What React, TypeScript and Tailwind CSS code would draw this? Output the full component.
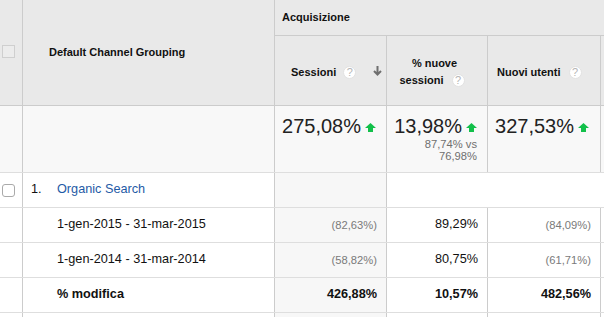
import React from "react";

const Q = () => (
  <span className="inline-flex w-[13px] h-[13px] rounded-full bg-white items-center justify-center text-[11px] leading-none text-[#b5b5b5] font-normal border border-[#e2e2e2]">?</span>
);

const Up = () => (
  <svg width="11" height="9" viewBox="0 0 11 9" className="shrink-0">
    <polygon points="5.5,0 11,5 8,5 8,9 3,9 3,5 0,5" fill="#12c04a" />
  </svg>
);

const Down = () => (
  <svg width="9" height="10" viewBox="0 0 9 10">
    <path d="M4.5 0 V8.5 M1 5 L4.5 8.5 L8 5" stroke="#6f6f6f" strokeWidth="2" fill="none" />
  </svg>
);

const Row = ({ children, bold }: { children: React.ReactNode[]; bold?: boolean }) => (
  <div className={`flex h-[35px] border-b border-[#dedede] bg-white text-[12.7px] text-[#111] ${bold ? "font-bold" : ""}`}>
    <div className="w-[23px] border-r border-[#ccc]" />
    <div className="w-[252px] border-r border-[#ccc] flex items-center pl-[34px]">{children[0]}</div>
    <div className="w-[112px] border-r border-[#ccc] bg-[#f7f7f7] flex items-center justify-end pr-[9px]">{children[1]}</div>
    <div className="w-[101px] border-r border-[#ccc] flex items-center justify-end pr-[9px]">{children[2]}</div>
    <div className="w-[113px] border-r border-[#ccc] flex items-center justify-end pr-[9px]">{children[3]}</div>
    <div className="flex-1" />
  </div>
);

export default function App() {
  return (
    <div className="w-[604px] h-[317px] overflow-hidden bg-white font-['Liberation_Sans',Arial,sans-serif] text-[#222]">
      {/* header */}
      <div className="flex h-[106px] bg-[#e9e9e9] border-b border-[#ccc]">
        <div className="w-[23px] border-r border-[#ccc] pt-[45px] pl-[2px]">
          <div className="w-[13px] h-[13px] border border-[#cfcfcf] bg-[#ececec]" />
        </div>
        <div className="w-[252px] border-r border-[#ccc] flex items-center pl-[26px] text-[11px] font-bold text-[#111]">
          Default Channel Grouping
        </div>
        <div className="flex-1 flex flex-col">
          <div className="h-[36px] border-b border-[#ccc] flex items-center pl-[7px] text-[11px] font-bold text-[#111]">
            Acquisizione
          </div>
          <div className="flex-1 flex text-[11px] font-bold text-[#111]">
            <div className="w-[112px] border-r border-[#ccc] flex items-center pt-[4px] pl-[16px]">
              <span>Sessioni</span>
              <span className="ml-[7px] flex"><Q /></span>
              <span className="ml-[17px] flex mb-[4px]"><Down /></span>
            </div>
            <div className="w-[101px] border-r border-[#ccc] flex flex-col justify-center pt-[2px] pr-[10px] leading-[17px]">
              <div className="text-center pl-[5px]">% nuove</div>
              <div className="flex items-center justify-center">
                <span>sessioni</span>
                <span className="ml-[8px] flex"><Q /></span>
              </div>
            </div>
            <div className="w-[113px] border-r border-[#ccc] flex items-center pt-[4px] pl-[9px]">
              <span>Nuovi utenti</span>
              <span className="ml-[8px] flex"><Q /></span>
            </div>
            <div className="flex-1" />
          </div>
        </div>
      </div>

      {/* totals */}
      <div className="flex h-[67px] bg-[#f8f8f8] border-b border-[#dedede] text-[#222]">
        <div className="w-[23px] border-r border-[#ccc]" />
        <div className="w-[252px] border-r border-[#ccc]" />
        <div className="w-[112px] border-r border-[#ccc] pt-[8px] pr-[10px] flex flex-col items-end">
          <div className="flex items-start">
            <span className="text-[20px] leading-[24px]">275,08%</span>
            <span className="ml-[4px] mt-[9px] flex"><Up /></span>
          </div>
        </div>
        <div className="w-[101px] border-r border-[#ccc] pt-[8px] pr-[10px] flex flex-col items-end">
          <div className="flex items-start">
            <span className="text-[20px] leading-[24px]">13,98%</span>
            <span className="ml-[4px] mt-[9px] flex"><Up /></span>
          </div>
          <div className="text-[11.2px] leading-[12px] text-[#6f6f6f] text-right">
            87,74% vs
            <br />
            76,98%
          </div>
        </div>
        <div className="w-[113px] border-r border-[#ccc] pt-[8px] pr-[11px] flex flex-col items-end">
          <div className="flex items-start">
            <span className="text-[20px] leading-[24px]">327,53%</span>
            <span className="ml-[4px] mt-[9px] flex"><Up /></span>
          </div>
        </div>
        <div className="flex-1" />
      </div>

      {/* Organic Search */}
      <div className="flex h-[35px] border-b border-[#dedede] bg-white text-[12.7px]">
        <div className="w-[23px] border-r border-[#ccc] flex items-center pl-[2px]">
          <div className="w-[13px] h-[13px] rounded-[3px] border border-[#aaa] bg-white" />
        </div>
        <div className="w-[252px] border-r border-[#ccc] flex items-center pl-[8px]">
          <span className="w-[26px] text-[#111]">1.</span>
          <span className="text-[#1f5ba6]">Organic Search</span>
        </div>
        <div className="w-[112px] border-r border-[#ccc] bg-[#f7f7f7]" />
        <div className="flex-1" />
      </div>

      <Row>
        {[
          "1-gen-2015 - 31-mar-2015",
          <span key="a" className="text-[11.2px] text-[#7a7a7a]">(82,63%)</span>,
          "89,29%",
          <span key="b" className="text-[11.2px] text-[#7a7a7a]">(84,09%)</span>,
        ]}
      </Row>
      <Row>
        {[
          "1-gen-2014 - 31-mar-2014",
          <span key="a" className="text-[11.2px] text-[#7a7a7a]">(58,82%)</span>,
          "80,75%",
          <span key="b" className="text-[11.2px] text-[#7a7a7a]">(61,71%)</span>,
        ]}
      </Row>
      <Row bold>
        {["% modifica", "426,88%", "10,57%", "482,56%"]}
      </Row>
      <Row>{["", "", "", ""]}</Row>
    </div>
  );
}
